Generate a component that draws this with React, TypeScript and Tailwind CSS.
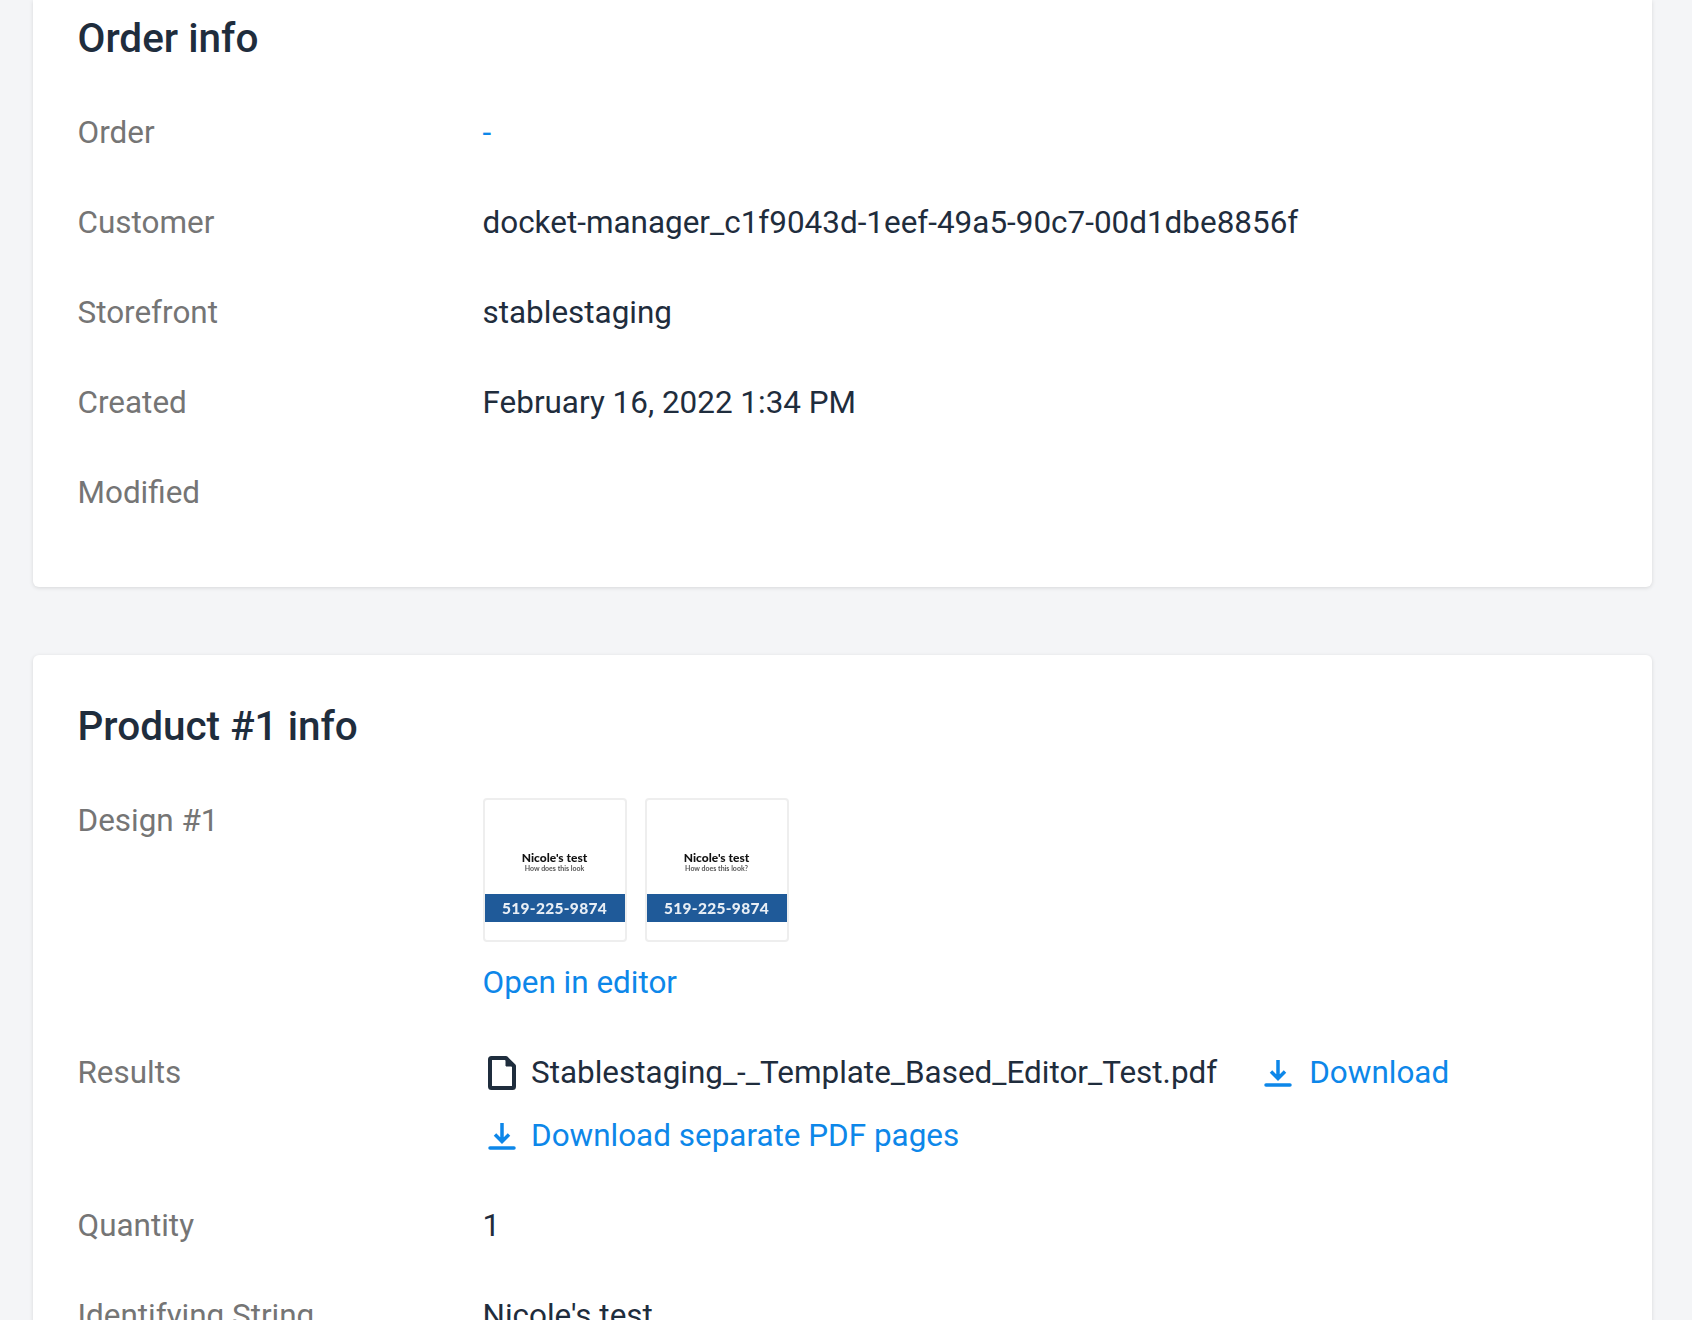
const labelCls = "w-[405px] shrink-0 text-[#757575]";
const linkCls = "text-[#0d87e9]";

function DownloadIcon() {
  return (
    <svg width="28" height="28" viewBox="0 0 28 28" fill="none" className="shrink-0">
      <path d="M14 1V19M7 12.5L14 19.5L21 12.5" stroke="#0d87e9" strokeWidth="3.5" />
      <path d="M2 26H26" stroke="#0d87e9" strokeWidth="3.5" strokeLinecap="round" />
    </svg>
  );
}

function FileIcon() {
  return (
    <svg width="28" height="34" viewBox="0 0 28 34" fill="none" className="shrink-0">
      <path
        d="M3.5 2H18L26 10V30.5C26 31.4 25.4 32 24.5 32H3.5C2.6 32 2 31.4 2 30.5V3.5C2 2.6 2.6 2 3.5 2Z"
        stroke="#1f2d3d"
        strokeWidth="4"
        strokeLinejoin="round"
      />
      <path d="M18 2V10H26Z" fill="#1f2d3d" stroke="#1f2d3d" strokeWidth="1" />
    </svg>
  );
}

function Row({ label, children }: { label: string; children?: React.ReactNode }) {
  return (
    <div className="flex h-[90px] items-center">
      <div className={labelCls}>{label}</div>
      <div className="text-[#1f2d3d]">{children}</div>
    </div>
  );
}

function Thumb({ sub }: { sub: string }) {
  return (
    <div className="flex h-[144px] w-[144px] flex-col rounded border-2 border-[#eeeeee] bg-white">
      <div className="flex h-[94px] flex-col justify-end pb-[22px] text-center font-['Lato',sans-serif] leading-none blur-[0.3px]">
        <div className="text-[12px] font-black text-[#111111]">Nicole's test</div>
        <div className="mt-[1px] text-[7px] font-bold text-[#555555]">{sub}</div>
      </div>
      <div className="flex h-[28px] items-center justify-center bg-[#1f5a99] pb-[1px] font-['Lato',sans-serif] text-[15.5px] font-black tracking-[0.3px] text-[#e8eef5] blur-[0.3px]">
        519-225-9874
      </div>
    </div>
  );
}

export default function App() {
  return (
    <div className="h-[1320px] overflow-hidden bg-[#f4f5f7] pr-[40px] pl-[33px] font-['Roboto',sans-serif] text-[31.45px] leading-[40px]">
      <div className="h-[587px] rounded-b-md bg-white pr-[45px] pl-[44.5px] shadow-[0_1px_4px_rgba(0,0,0,0.12)]">
        <h2 className="pt-[16px] text-[40.5px] leading-[44px] font-medium text-[#1f2d3d]">Order info</h2>
        <div className="mt-[28px]">
          <Row label="Order">
            <span className={linkCls}>-</span>
          </Row>
          <Row label="Customer">docket-manager_c1f9043d-1eef-49a5-90c7-00d1dbe8856f</Row>
          <Row label="Storefront">stablestaging</Row>
          <Row label="Created">February 16, 2022 1:34 PM</Row>
          <Row label="Modified" />
        </div>
      </div>

      <div className="mt-[68px] rounded-t-md bg-white pt-[49px] pr-[45px] pb-[60px] pl-[44.5px] shadow-[0_1px_4px_rgba(0,0,0,0.12)]">
        <h2 className="text-[40.5px] leading-[44px] font-medium text-[#1f2d3d]">Product #1 info</h2>
        <div className="mt-[50px] flex">
          <div className={`${labelCls} pt-[3px]`}>Design #1</div>
          <div>
            <div className="flex gap-[18px]">
              <Thumb sub="How does this look" />
              <Thumb sub="How does this look?" />
            </div>
            <div className={`mt-[21px] ${linkCls}`}>Open in editor</div>
          </div>
        </div>
        <div className="mt-[50px] flex">
          <div className={labelCls}>Results</div>
          <div className="text-[#1f2d3d]">
            <div className="flex items-center">
              <span className="ml-[5px] mr-[15.5px]">
                <FileIcon />
              </span>
              <span>Stablestaging_-_Template_Based_Editor_Test.pdf</span>
              <span className="ml-[47px] mr-[17px]">
                <DownloadIcon />
              </span>
              <span className={linkCls}>Download</span>
            </div>
            <div className={`mt-[23px] flex items-center ${linkCls}`}>
              <span className="ml-[5px] mr-[15.5px]">
                <DownloadIcon />
              </span>
              <span>Download separate PDF pages</span>
            </div>
          </div>
        </div>
        <div className="mt-[50px] flex">
          <div className={labelCls}>Quantity</div>
          <div className="text-[#1f2d3d]">1</div>
        </div>
        <div className="mt-[50px] flex">
          <div className={labelCls}>Identifying String</div>
          <div className="text-[#1f2d3d]">Nicole's test</div>
        </div>
      </div>
    </div>
  );
}
